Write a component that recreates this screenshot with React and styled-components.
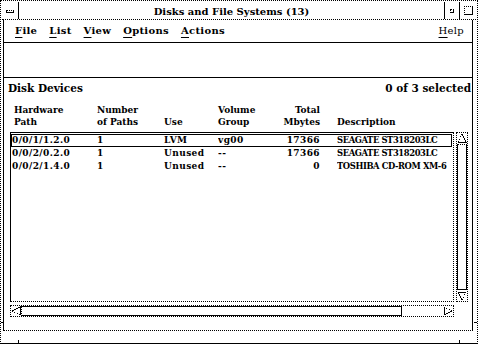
import React from 'react';
import styled, { createGlobalStyle } from 'styled-components';

const GlobalStyle = createGlobalStyle`
  html, body {
    margin: 0;
    padding: 0;
    background: #fff;
  }
  body {
    font-family: "DejaVu Serif", "Liberation Serif", serif;
    font-weight: bold;
    color: #000;
  }
`;

const Window = styled.div`
  position: relative;
  box-sizing: border-box;
  width: 478px;
  height: 344px;
  border: 1px dotted #000;
  border-bottom: 1px solid #000;
  padding: 1px;
  display: flex;
  flex-direction: column;
  background: #fff;
`;

const Tick = styled.span`
  position: absolute;
  background: #000;
  width: ${p => (p.v ? '1px' : '3px')};
  height: ${p => (p.v ? '3px' : '1px')};
`;

const TitleBar = styled.div`
  display: flex;
  height: 17px;
  border-bottom: 1px dotted #000;
`;

const MenuBox = styled.div`
  width: 16px;
  border-right: 1px solid #000;
  display: flex;
  align-items: center;
  justify-content: center;
`;

const MenuGlyph = styled.span`
  display: block;
  width: 6px;
  height: 1px;
  border: 1px solid #000;
  border-top-style: dotted;
  margin-top: 1px;
`;

const TitleText = styled.div`
  flex: 1;
  text-align: center;
  font-size: 10px;
  line-height: 17px;
  padding-top: 1px;
  white-space: nowrap;
`;

const FrameButton = styled.div`
  width: ${p => p.w}px;
  border-left: 1px solid #000;
  display: flex;
  align-items: center;
  justify-content: center;
`;

const MinGlyph = styled.span`
  display: block;
  width: 2px;
  height: 2px;
  border: 1px dotted #000;
  border-right-style: solid;
  border-bottom-style: solid;
`;

const MaxGlyph = styled.span`
  display: block;
  width: 7px;
  height: 7px;
  border: 1px dotted #000;
  border-right-style: solid;
  border-bottom-style: solid;
`;

const Main = styled.div`
  flex: 1;
  display: flex;
  flex-direction: column;
  margin: 0 3px 11px 1px;
  border-left: 1px solid #000;
  border-right: 1px solid #000;
  border-bottom: 1px dotted #000;
`;

const MenuBar = styled.div`
  display: flex;
  gap: 12px;
  height: 22px;
  line-height: 22px;
  padding: 0 8px 0 11px;
  border-bottom: 1px solid #000;
  font-size: 10px;
  letter-spacing: 0.3px;
`;

const MenuItem = styled.span`
  margin-left: ${p => (p.right ? 'auto' : '0')};
  font-weight: ${p => (p.right ? 'normal' : 'bold')};
  u {
    text-decoration: underline;
    text-underline-offset: 3px;
    text-decoration-thickness: 1px;
  }
`;

const ToolArea = styled.div`
  height: 34px;
  border-bottom: 1px solid #000;
`;

const WorkHeader = styled.div`
  display: flex;
  justify-content: space-between;
  height: 20px;
  line-height: 20px;
  padding: 0 1px 0 4px;
  font-size: 10.5px;
`;

const cols = '85px 67px 54px 52px 50px 1fr';

const HeaderGrid = styled.div`
  display: grid;
  grid-template-columns: ${cols};
  margin-left: 8px;
  padding: 6px 0 4px;
  font-size: 9px;
  line-height: 12px;
  height: 24px;
`;

const HeadCell = styled.div`
  align-self: end;
  white-space: nowrap;
  text-align: ${p => (p.num ? 'right' : 'left')};
  padding-left: ${p => (p.first ? '2px' : '0')};
  margin-left: ${p => (p.desc ? '17px' : '0')};
`;

const Scrolled = styled.div`
  display: grid;
  grid-template-columns: 1fr 12px;
  grid-template-rows: 1fr 12px;
  column-gap: 2px;
  row-gap: 3px;
  height: 185px;
  margin: 0 4px 0 6px;
`;

const ListBox = styled.div`
  border: 1px dotted #000;
  border-top: 1px solid #000;
  border-left: 1px solid #000;
  padding: 1px 1px 0 0;
  overflow: hidden;
`;

const Row = styled.div`
  display: grid;
  grid-template-columns: ${cols};
  height: 11px;
  line-height: 11px;
  border: 1px solid ${p => (p.selected ? '#000' : 'transparent')};
  font-size: 9px;
  letter-spacing: 0.4px;
  white-space: nowrap;
`;

const Cell = styled.div`
  overflow: hidden;
  text-align: ${p => (p.num ? 'right' : 'left')};
`;

const DescCell = styled(Cell)`
  margin-left: 17px;
  font-size: 8.4px;
  letter-spacing: -0.4px;
`;

const VScroll = styled.div`
  display: flex;
  flex-direction: column;
  border: 1px dotted #000;
`;

const HScroll = styled.div`
  display: flex;
  border: 1px dotted #000;
`;

const Thumb = styled.div`
  box-sizing: border-box;
  border: 1px solid #000;
  ${p => (p.horizontal ? 'border-left-style: dotted;' : 'flex: 1; margin: 1px 0; border-top-style: dotted;')}
`;

const Trough = styled.div`
  flex: 1;
`;

const ArrowBox = styled.div`
  width: 10px;
  height: 10px;
  flex: none;
  display: flex;
  svg {
    display: block;
  }
`;

const rotations = { up: 0, right: 90, down: 180, left: 270 };

function Arrow({ dir }) {
  return (
    <ArrowBox>
      <svg width="10" height="10" viewBox="0 0 10 10" shapeRendering="crispEdges">
        <g transform={`rotate(${rotations[dir]} 5 5)`}>
          <polyline points="1,9 5,1" fill="none" stroke="#000" strokeWidth="1" strokeDasharray="1 1" />
          <polyline points="5,1 9,9 1,9" fill="none" stroke="#000" strokeWidth="1" />
        </g>
      </svg>
    </ArrowBox>
  );
}

const devices = [
  { path: '0/0/1/1.2.0', paths: '1', use: 'LVM', group: 'vg00', mbytes: '17366', desc: 'SEAGATE ST318203LC', selected: true },
  { path: '0/0/2/0.2.0', paths: '1', use: 'Unused', group: '--', mbytes: '17366', desc: 'SEAGATE ST318203LC' },
  { path: '0/0/2/1.4.0', paths: '1', use: 'Unused', group: '--', mbytes: '0', desc: 'TOSHIBA CD-ROM XM-6' },
];

const menus = [['F', 'ile'], ['L', 'ist'], ['V', 'iew'], ['O', 'ptions'], ['A', 'ctions']];

export default function App() {
  return (
    <>
      <GlobalStyle />
      <Window>
        <TitleBar>
          <MenuBox><MenuGlyph /></MenuBox>
          <TitleText>Disks and File Systems (13)</TitleText>
          <FrameButton w={14}><MinGlyph /></FrameButton>
          <FrameButton w={16}><MaxGlyph /></FrameButton>
        </TitleBar>
        <Main>
          <MenuBar>
            {menus.map(([k, rest]) => (
              <MenuItem key={k}><u>{k}</u>{rest}</MenuItem>
            ))}
            <MenuItem right><u>H</u>elp</MenuItem>
          </MenuBar>
          <ToolArea />
          <WorkHeader>
            <span>Disk Devices</span>
            <span>0 of 3 selected</span>
          </WorkHeader>
          <HeaderGrid>
            <HeadCell first>Hardware<br />Path</HeadCell>
            <HeadCell>Number<br />of Paths</HeadCell>
            <HeadCell>Use</HeadCell>
            <HeadCell>Volume<br />Group</HeadCell>
            <HeadCell num>Total<br />Mbytes</HeadCell>
            <HeadCell desc>Description</HeadCell>
          </HeaderGrid>
          <Scrolled>
            <ListBox>
              {devices.map(d => (
                <Row key={d.path} selected={d.selected}>
                  <Cell>{d.path}</Cell>
                  <Cell>{d.paths}</Cell>
                  <Cell>{d.use}</Cell>
                  <Cell>{d.group}</Cell>
                  <Cell num>{d.mbytes}</Cell>
                  <DescCell>{d.desc}</DescCell>
                </Row>
              ))}
            </ListBox>
            <VScroll>
              <Arrow dir="up" />
              <Thumb />
              <Arrow dir="down" />
            </VScroll>
            <HScroll>
              <Arrow dir="left" />
              <Thumb horizontal style={{ width: 381 }} />
              <Trough />
              <Arrow dir="right" />
            </HScroll>
          </Scrolled>
        </Main>
        <Tick style={{ left: 0, top: 321 }} />
        <Tick v style={{ left: 17, bottom: 0 }} />
        <Tick v style={{ right: 17, bottom: 0 }} />
        <Tick style={{ right: 0, top: 321 }} />
      </Window>
    </>
  );
}
